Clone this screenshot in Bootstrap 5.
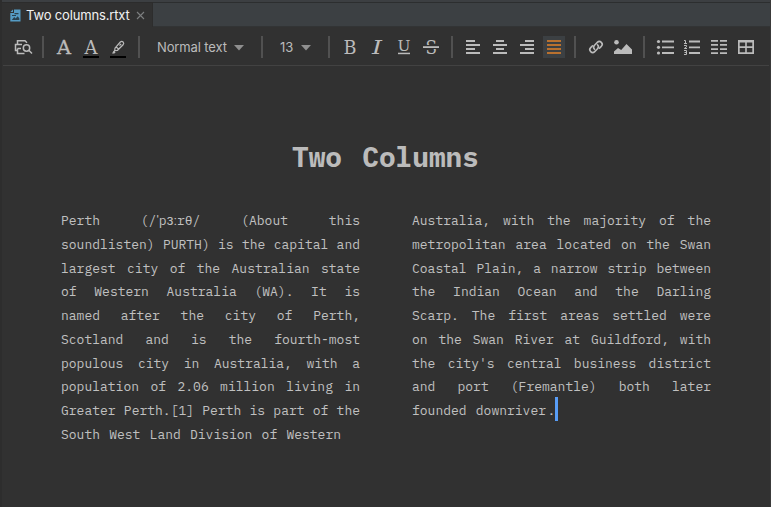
<!DOCTYPE html>
<html lang="en">
<head>
<meta charset="utf-8">
<title>Two columns.rtxt</title>
<link rel="stylesheet" href="https://cdn.jsdelivr.net/npm/bootstrap@5.3.0/dist/css/bootstrap.min.css">
<style>
body{background:#313131;color:#bbb;font-family:Inter,"Liberation Sans",sans-serif;font-size:13px}
.editor-window{height:507px;border-left:2px solid #2d2d2d;border-right:1px solid #3a3a3a}
.tab-strip{height:27px;background:#3c4043;border-top:2px solid #3c3f42;box-shadow:inset 0 1px #2c2e2f,inset 0 -1px #323435}
.file-tab{width:151px;background:#313131;color:#f2f2f2;padding-left:8px;border-top:1px solid #2c2c2c;border-right:1px solid #2d2d2d}
.file-tab .tab-title{width:104px;margin-left:5px;line-height:24px;letter-spacing:-.16px;white-space:nowrap}
.file-tab .btn-close-tab{margin-left:6px;line-height:0}
.toolbar-row{height:39px;padding:2px 0 0 5px;margin:0 1px;border-bottom:1px solid #424242}
.tool{width:27px;height:26px;flex:none;line-height:0;color:#bbb;background:none;border:0;padding:0}
.tool svg{display:block;fill:currentColor}
.tool .ln{fill:none;stroke:currentColor}
.glyph{font-family:"DejaVu Serif",serif;font-size:18.5px}
.divider{width:2px;height:22px;flex:none;margin:0 6px 0 7px;background:#515151}
.picker{height:26px;background:none;border:0;color:#bbb;padding:1px 10px 0 11px;flex:none;letter-spacing:-.12px}
.picker-style{width:108px}
.picker-size{width:52px;padding-left:11px}
.picker svg{fill:#8f8f8f;display:block}
.doc{font-family:"IBM Plex Mono","Liberation Mono","DejaVu Sans Mono",monospace;padding:72px 57px 0 59px}
.doc h1{font-size:27.8px;font-weight:700;line-height:39px;margin:0 0 32px;padding-right:3px;color:#bbb;word-spacing:3.5px}
.doc-columns{display:grid;grid-template-columns:299px 299px;column-gap:52px;color:#c0c0c0}
.doc-columns p{font-size:13px;line-height:23.75px;margin:0}
.text-line{display:block;text-align:justify;text-align-last:justify;white-space:normal}
.text-line:last-child{text-align-last:left;word-spacing:1.4px}
.ipa{font-family:Inter,"Noto Sans",sans-serif}
.stop{margin-left:1.500px}
.caret{display:inline-block;width:3px;height:24px;margin:-9px 0 -3px -.5px;vertical-align:middle;background:#589df6}
</style>
<script src="https://cdn.jsdelivr.net/npm/bootstrap@5.3.0/dist/js/bootstrap.bundle.min.js"></script>
</head>
<body class="overflow-hidden">
<div class="editor-window d-flex flex-column">
  <div class="tab-strip d-flex">
    <div class="file-tab d-flex align-items-center">
      <svg width="11" height="13" viewBox="0 0 11 13"><path fill="#559bc4" d="M4 .5h6.500v12H.3V4H4z"/><path fill="#559bc4" d="M.3 3 3 .5V3z"/><path fill="#29404e" d="M4.500 4h4v1.200h-4zM2 6h4v1.100H2zM1.800 11l2.400-3 1.500 1.400L7.600 7.200l1.700 2V11z"/></svg>
      <span class="tab-title">Two columns.rtxt</span>
      <span class="btn-close-tab"><svg width="9" height="9" viewBox="0 0 9 9"><path d="M1 1l7 7M8 1L1 8" stroke="#7d7f80" stroke-width="1.1"/></svg></span>
    </div>
  </div>
  <div class="toolbar-row d-flex align-items-center">
    <button class="tool" aria-label="Print preview"><svg width="27" height="26"><g class="ln" stroke-width="1.500"><path d="M9.500 10V6.800h7.500l2 2M9.500 16.500H7.500v-6H14M9.500 14.500H13M9.500 14.500v5H16.500"/><circle cx="18.500" cy="14" r="3.200"/><path d="M20.800 16.300l3.200 3.200"/></g></svg></button>
    <span class="divider"></span>
    <button class="tool" aria-label="Font"><svg width="27" height="26"><text class="glyph" x="7" y="20" textLength="14" lengthAdjust="spacingAndGlyphs" stroke="currentColor" stroke-width=".3">A</text></svg></button>
    <button class="tool" aria-label="Text color"><svg width="27" height="26"><text class="glyph" x="7.500" y="19.700" textLength="13" lengthAdjust="spacingAndGlyphs">A</text><path fill="#000" d="M6 22h16v2H6z"/></svg></button>
    <button class="tool" aria-label="Highlight color"><svg width="27" height="26"><g class="ln" stroke-width="1.200"><path d="M11 14.200L16.300 8q1.500-1.200 2.800 0t0 2.800L13.500 16.300l-2.800.2zM12.200 13l2.600 2.300M15.500 11.500l1.700-1.700"/><path d="M10.800 16.300L9 18.800"/></g><path d="M8 19.500l2-2.500 1.600 1.200-1.200 1.300z"/><path fill="#000" d="M6 22h16v2H6z"/></svg></button>
    <span class="divider"></span>
    <button class="picker picker-style d-flex align-items-center justify-content-between"><span>Normal text</span><svg width="10" height="6"><path d="M0 0h10L5 5.500z"/></svg></button>
    <span class="divider"></span>
    <button class="picker picker-size d-flex align-items-center justify-content-between"><span>13</span><svg width="10" height="6"><path d="M0 0h10L5 5.500z"/></svg></button>
    <span class="divider"></span>
    <button class="tool" aria-label="Bold"><svg width="27" height="26"><text class="glyph" x="7.500" y="19.800" textLength="13" lengthAdjust="spacingAndGlyphs">B</text></svg></button>
    <button class="tool" aria-label="Italic"><svg width="27" height="26"><text class="glyph" x="9" y="19.800" textLength="10" lengthAdjust="spacingAndGlyphs" font-style="italic">I</text></svg></button>
    <button class="tool" aria-label="Underline"><svg width="27" height="26"><text class="glyph" x="7.500" y="17" textLength="13" lengthAdjust="spacingAndGlyphs" style="font-size:15.500px">U</text><path d="M8 18.700h12v1.500H8z"/></svg></button>
    <button class="tool" aria-label="Strikethrough"><svg width="27" height="26"><text class="glyph" x="8.500" y="19.700" textLength="11.500" lengthAdjust="spacingAndGlyphs">S</text><path fill="#313131" d="M6 11h16v4H6z"/><path d="M6 12.200h16v1.800H6z"/></svg></button>
    <span class="divider"></span>
    <button class="tool" aria-label="Align left"><svg width="27" height="26"><path d="M7 6h9v2H7zM7 10h14v2H7zM7 14h9v2H7zM7 18h14v2H7z"/></svg></button>
    <button class="tool" aria-label="Align center"><svg width="27" height="26"><path d="M10 6h8v2h-8zM7 10h14v2H7zM10 14h8v2h-8zM7 18h14v2H7z"/></svg></button>
    <button class="tool" aria-label="Align right"><svg width="27" height="26"><path d="M12 6h9v2h-9zM7 10h14v2H7zM12 14h9v2h-9zM7 18h14v2H7z"/></svg></button>
    <button class="tool" aria-label="Justify"><svg width="27" height="26"><path fill="#3c4043" d="M3 2h22v22H3z"/><path fill="#b9712f" d="M7 6h14v2H7zM7 10h14v2H7zM7 14h14v2H7zM7 18h14v2H7z"/></svg></button>
    <span class="divider"></span>
    <button class="tool" aria-label="Link"><svg width="27" height="26"><g class="ln" stroke-width="1.600" stroke-linecap="round"><path d="M12.500 15.200q-2-2 0-4l2.800-2.800q2-2 4 0t0 4l-1.800 1.800"/><path d="M15.500 10.800q2 2 0 4l-2.800 2.800q-2 2-4 0t0-4l1.800-1.800"/></g></svg></button>
    <button class="tool" aria-label="Image"><svg width="27" height="26"><circle cx="7.500" cy="8.300" r="2.300"/><path d="M5 20v-2.500l4-3.500 3.200 2L17.500 10l5.500 5.500V20z"/></svg></button>
    <span class="divider"></span>
    <button class="tool" aria-label="Bulleted list"><svg width="27" height="26"><circle cx="7.500" cy="7.500" r="1.600"/><circle cx="7.500" cy="13.300" r="1.600"/><circle cx="7.500" cy="19" r="1.600"/><path d="M11 6.600h12v1.800H11zM11 12.400h12v1.800H11zM11 18.100h12v1.800H11z"/></svg></button>
    <button class="tool" aria-label="Numbered list"><svg width="27" height="26"><g class="ln"><path d="M6 6.500h1.500V9M6 9.500h3M6 11.500h2.500v1.300L6.300 14.500H9M6 16.500h2.500v4H6M6.500 18.500h2"/></g><path d="M11 6.600h11v1.800H11zM11 12.400h11v1.800H11zM11 18.100h11v1.800H11z"/></svg></button>
    <button class="tool" aria-label="Columns"><svg width="27" height="26"><path d="M6 6h7v1.700H6zM6 10.100h7v1.700H6zM6 14.200h7v1.700H6zM6 18.300h7V20H6zM15 6h7v1.700h-7zM15 10.100h7v1.700h-7zM15 14.200h7v1.700h-7zM15 18.300h7V20h-7z"/></svg></button>
    <button class="tool" aria-label="Table"><svg width="27" height="26"><path fill-rule="evenodd" d="M6 6h16v14H6zM7.700 8.600v3.600h5.500V8.600zM14.800 8.600v3.600h5.500V8.600zM7.700 14v4.300h5.500V14zM14.800 14v4.300h5.500V14z"/></svg></button>
  </div>
  <main class="doc flex-grow-1">
    <h1 class="text-center">Two Columns</h1>
    <div class="doc-columns">
      <p>
        <span class="text-line">Perth (/<span class="ipa">ˈ</span>p<span class="ipa">ɜː</span>rθ/ (About this</span>
        <span class="text-line">soundlisten) PURTH) is the capital and</span>
        <span class="text-line">largest city of the Australian state</span>
        <span class="text-line">of Western Australia (WA). It is</span>
        <span class="text-line">named after the city of Perth,</span>
        <span class="text-line">Scotland and is the fourth-most</span>
        <span class="text-line">populous city in Australia, with a</span>
        <span class="text-line">population of 2.06 million living in</span>
        <span class="text-line">Greater Perth.[1] Perth is part of the</span>
        <span class="text-line">South West Land Division of Western</span>
      </p>
      <p>
        <span class="text-line">Australia, with the majority of the</span>
        <span class="text-line">metropolitan area located on the Swan</span>
        <span class="text-line">Coastal Plain, a narrow strip between</span>
        <span class="text-line">the Indian Ocean and the Darling</span>
        <span class="text-line">Scarp. The first areas settled were</span>
        <span class="text-line">on the Swan River at Guildford, with</span>
        <span class="text-line">the city's central business district</span>
        <span class="text-line">and port (Fremantle) both later</span>
        <span class="text-line">founded downriver<span class="stop">.</span><span class="caret"></span></span>
      </p>
    </div>
  </main>
</div>
</body>
</html>
